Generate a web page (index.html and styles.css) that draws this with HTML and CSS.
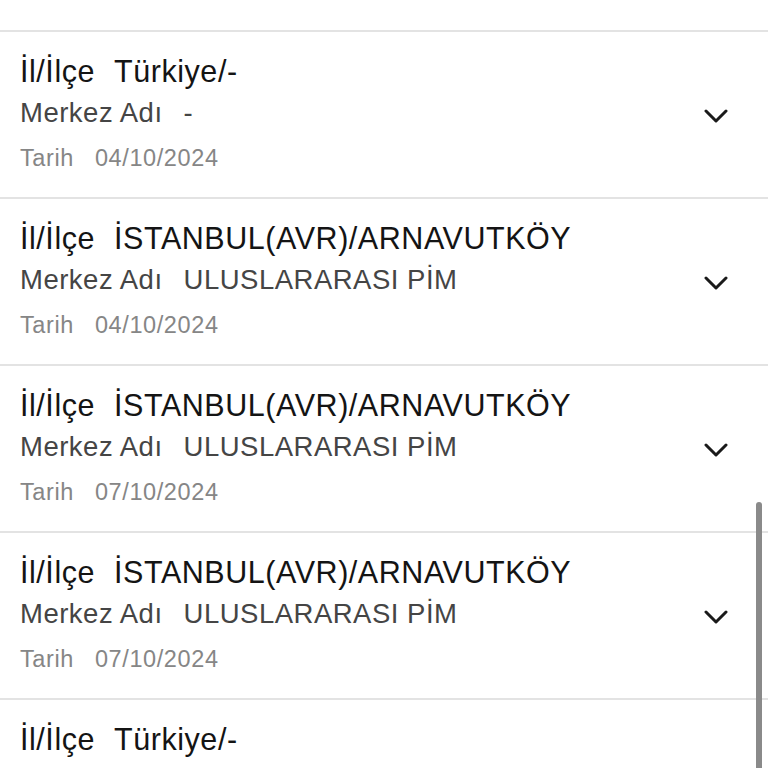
FILE: index.html
```html
<!DOCTYPE html>
<html lang="tr">
<head>
  <meta charset="UTF-8" />
  <meta name="viewport" content="width=device-width, initial-scale=1.0"/>
  <title>Randevular</title>
  <link rel="stylesheet" href="styles.css">
</head>
<body>
  <div class="list-wrap">
    <ul class="list">
      <li class="item">
        <div class="info">
          <div class="row row-main"><span class="label">İl/İlçe</span><span>Türkiye/-</span></div>
          <div class="row row-sub"><span class="label">Merkez Adı</span><span>-</span></div>
          <div class="row row-date"><span class="label">Tarih</span><span>01/10/2024</span></div>
        </div>
        <svg class="chevron" viewBox="0 0 24 14"><polyline points="2,2 12,12 22,2"/></svg>
      </li>
      <li class="item">
        <div class="info">
          <div class="row row-main"><span class="label">İl/İlçe</span><span>Türkiye/-</span></div>
          <div class="row row-sub"><span class="label">Merkez Adı</span><span>-</span></div>
          <div class="row row-date"><span class="label">Tarih</span><span>04/10/2024</span></div>
        </div>
        <svg class="chevron" viewBox="0 0 24 14"><polyline points="2,2 12,12 22,2"/></svg>
      </li>
      <li class="item">
        <div class="info">
          <div class="row row-main"><span class="label">İl/İlçe</span><span>İSTANBUL(AVR)/ARNAVUTKÖY</span></div>
          <div class="row row-sub"><span class="label">Merkez Adı</span><span>ULUSLARARASI PİM</span></div>
          <div class="row row-date"><span class="label">Tarih</span><span>04/10/2024</span></div>
        </div>
        <svg class="chevron" viewBox="0 0 24 14"><polyline points="2,2 12,12 22,2"/></svg>
      </li>
      <li class="item">
        <div class="info">
          <div class="row row-main"><span class="label">İl/İlçe</span><span>İSTANBUL(AVR)/ARNAVUTKÖY</span></div>
          <div class="row row-sub"><span class="label">Merkez Adı</span><span>ULUSLARARASI PİM</span></div>
          <div class="row row-date"><span class="label">Tarih</span><span>07/10/2024</span></div>
        </div>
        <svg class="chevron" viewBox="0 0 24 14"><polyline points="2,2 12,12 22,2"/></svg>
      </li>
      <li class="item">
        <div class="info">
          <div class="row row-main"><span class="label">İl/İlçe</span><span>İSTANBUL(AVR)/ARNAVUTKÖY</span></div>
          <div class="row row-sub"><span class="label">Merkez Adı</span><span>ULUSLARARASI PİM</span></div>
          <div class="row row-date"><span class="label">Tarih</span><span>07/10/2024</span></div>
        </div>
        <svg class="chevron" viewBox="0 0 24 14"><polyline points="2,2 12,12 22,2"/></svg>
      </li>
      <li class="item">
        <div class="info">
          <div class="row row-main"><span class="label">İl/İlçe</span><span>Türkiye/-</span></div>
          <div class="row row-sub"><span class="label">Merkez Adı</span><span>-</span></div>
          <div class="row row-date"><span class="label">Tarih</span><span>08/10/2024</span></div>
        </div>
        <svg class="chevron" viewBox="0 0 24 14"><polyline points="2,2 12,12 22,2"/></svg>
      </li>
    </ul>
    <div class="scrollbar"></div>
  </div>
</body>
</html>
```

FILE: styles.css
```css
html, body {
  margin: 0;
  height: 100%;
  background-color: #fff;
}
body {
  font-family: "Liberation Sans", Arial, Helvetica, sans-serif;
  overflow: hidden;
}
.list-wrap {
  position: relative;
  height: 100vh;
  overflow: hidden;
}
.list {
  list-style: none;
  margin: -137px 0 0 0;
  padding: 0;
}
.item {
  display: flex;
  align-items: center;
  height: 167px;
  box-sizing: border-box;
  border-top: 2px solid #e3e3e3;
  padding: 0 40px 0 20px;
}
.item:first-child {
  border-top: none;
}
.info {
  flex: 1;
  padding-top: 21px;
  padding-bottom: 18px;
}
.row {
  display: flex;
  gap: 21px;
  white-space: nowrap;
}
.row-main {
  gap: 19px;
  font-size: 30.5px;
  line-height: 36px;
  letter-spacing: 0.55px;
  color: #141414;
}
.row-sub {
  font-size: 27.5px;
  line-height: 48px;
  letter-spacing: 0.5px;
  color: #454545;
}
.row-date {
  font-size: 23.5px;
  line-height: 42px;
  letter-spacing: 0.6px;
  color: #868686;
}
.chevron {
  width: 24px;
  height: 14px;
  margin-top: 2px;
  fill: none;
  stroke: #1a1a1a;
  stroke-width: 3;
  stroke-linecap: round;
  stroke-linejoin: round;
}
.scrollbar {
  position: absolute;
  right: 6px;
  top: 502px;
  width: 6px;
  height: 300px;
  border-radius: 3px;
  background-color: #8a8a8a;
}
```
